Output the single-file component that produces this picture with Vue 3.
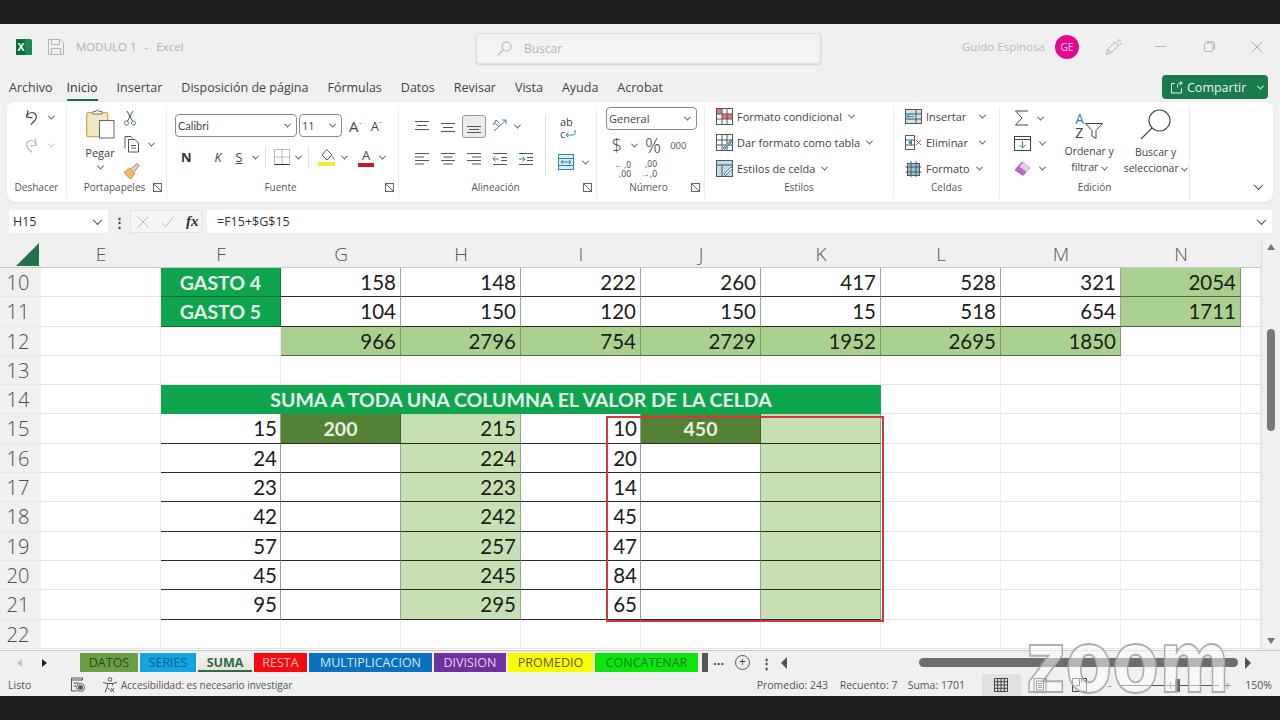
<script setup>
const tabsTop = ['Archivo', 'Inicio', 'Insertar', 'Disposición de página', 'Fórmulas', 'Datos', 'Revisar', 'Vista', 'Ayuda', 'Acrobat']
const columns = ['E', 'F', 'G', 'H', 'I', 'J', 'K', 'L', 'M', 'N', '']

const plainRow = (n) => ({ n, cells: Array.from({ length: 11 }, () => ({})) })
const num = (t) => ({ t, k: 'num' })
const tot = (t) => ({ t, k: 'tot' })

const tail = [15, 24, 23, 42, 57, 45, 95]
const extra = [10, 20, 14, 45, 47, 84, 65]

const dataRows = tail.map((v, i) => ({
  n: 15 + i,
  cells: [
    {},
    { t: v, k: 'num tbl' },
    i === 0 ? { t: 200, k: 'fixed' } : { k: 'tbl' },
    { t: v + 200, k: 'soft' },
    { t: extra[i], k: 'num tbl' },
    i === 0 ? { t: 450, k: 'fixed' } : { k: 'tbl' },
    { k: 'soft' },
    {}, {}, {}, {}, {},
  ].slice(0, 11),
}))

const rows = [
  { n: 10, cells: [{}, { t: 'GASTO 4', k: 'head' }, num(158), num(148), num(222), num(260), num(417), num(528), num(321), tot(2054), {}] },
  { n: 11, cells: [{}, { t: 'GASTO 5', k: 'head' }, num(104), num(150), num(120), num(150), num(15), num(518), num(654), tot(1711), {}] },
  { n: 12, cells: [{}, {}, tot(966), tot(2796), tot(754), tot(2729), tot(1952), tot(2695), tot(1850), {}, {}] },
  plainRow(13),
  { n: 14, cells: [{}, { t: 'SUMA A TODA UNA COLUMNA EL VALOR DE LA CELDA', k: 'title', span: 6 }, {}, {}, {}, {}] },
  ...dataRows,
  plainRow(22),
]

const sheets = [
  { name: 'DATOS', w: 58, bg: '#6c9e46', fg: '#2f4a1c' },
  { name: 'SERIES', w: 56, bg: '#12a5e2', fg: '#0c5f86' },
  { name: 'SUMA', w: 54, bg: 'linear-gradient(#f4f4f4, #e9e2d8)', fg: '#2e6b45', active: true },
  { name: 'RESTA', w: 53, bg: '#f40a0f', fg: '#f6c0c0' },
  { name: 'MULTIPLICACION', w: 123, bg: '#0b70bd', fg: '#cfe8f8' },
  { name: 'DIVISION', w: 72, bg: '#70309f', fg: '#e2d0ee' },
  { name: 'PROMEDIO', w: 85, bg: '#fbfb00', fg: '#5c5c10' },
  { name: 'CONCATENAR', w: 103, bg: '#0de60d', fg: '#0e7a28' },
]
</script>

<template>
  <div class="screen">
    <div class="window">
      <header class="titlebar">
        <div class="tb-left">
          <svg class="xl" width="16" height="16" viewBox="0 0 16 16">
            <rect width="16" height="16" rx="1.5" fill="#1a8a50" />
            <rect width="9" height="16" rx="1" fill="#0e6b3a" />
            <text x="1.6" y="12" font-size="10.5" font-weight="700" fill="#fff" font-family="Liberation Sans, sans-serif">X</text>
          </svg>
          <svg class="save" width="16" height="16" viewBox="0 0 16 16" fill="none" stroke="#b4b4b4">
            <path d="M.5.5h12l3 3v12H.5zM3.5.5v5h8v-5M3.5 15.5v-6h9v6" />
          </svg>
          <span class="doc">MODULO 1</span>
          <span class="doc sep">-</span>
          <span class="doc">Excel</span>
        </div>
        <div class="search">
          <svg width="15" height="15" viewBox="0 0 15 15" fill="none" stroke="#b8b8b8" stroke-width="1.1">
            <circle cx="9.5" cy="5.5" r="4.5" /><path d="M6 9l-5 5" />
          </svg>
          <span>Buscar</span>
        </div>
        <div class="tb-right">
          <span class="user">Guido Espinosa</span>
          <span class="avatar">GE</span>
          <svg class="pen" width="18" height="18" viewBox="0 0 18 18" fill="none" stroke="#b4b4b4">
            <path d="M1.5 16.5l1-5L10 4l4 3-7.5 7.5zM2.5 11.5l4 3M14 1l-1 2.5M17 5l-2 .8M16 1.5l-1.8 2" />
          </svg>
          <svg class="min" width="11" height="11" viewBox="0 0 11 11" stroke="#bcbcbc"><path d="M0 5.5h11" /></svg>
          <svg class="rest" width="11" height="11" viewBox="0 0 11 11" fill="none" stroke="#b4b4b4">
            <rect x=".5" y="2" width="8.5" height="8.5" rx="1.5" /><path d="M2.5.5h6a2 2 0 0 1 2 2v6" />
          </svg>
          <svg class="close" width="12" height="12" viewBox="0 0 12 12" stroke="#adadad"><path d="M.5.5l11 11M11.5.5l-11 11" /></svg>
        </div>
      </header>

      <nav class="tabs">
        <span v-for="t in tabsTop" :key="t" class="tab" :class="{ on: t === 'Inicio' }">{{ t }}</span>
        <button class="share">
          <svg width="13" height="13" viewBox="0 0 13 13" fill="none" stroke="#e8f4ec">
            <path d="M5 2.5H1.5v9.5h10V7.5M7.5 6.500V4.500c0-1.500 1-2.500 2.500-2.500h2M10 .5L12.300 2 10 4" />
          </svg>
          <span>Compartir</span>
          <i class="chev light"></i>
        </button>
      </nav>

      <section class="ribbon">
        <div class="group g-undo">
          <div class="undo-body">
            <div class="ic-row">
              <svg width="17" height="17" viewBox="0 0 17 17" fill="none" stroke="#444" stroke-width="1.2">
                <path d="M5 1.500L3.500 8l6 .8M3.500 8C5 4.500 8 3 10.500 3.800c3.500 1 3.700 6 .8 8.200L8 15.500" />
              </svg>
              <i class="chev"></i>
            </div>
            <div class="ic-row faded">
              <svg width="17" height="17" viewBox="0 0 17 17" fill="none" stroke="#b9b9b9" stroke-width="1.2">
                <path d="M12 1.500L13.500 8l-6 .8M13.500 8C12 4.500 9 3 6.500 3.800c-3.500 1-3.700 6-.8 8.200L9 15.500" />
              </svg>
              <i class="chev pale"></i>
            </div>
          </div>
          <div class="g-label">Deshacer</div>
        </div>

        <div class="group g-clip">
          <div class="clip-body">
            <div class="paste">
              <svg width="29" height="30" viewBox="0 0 29 30">
                <rect x=".7" y="3.700" width="21" height="24" rx="1.500" fill="#f3e7c4" stroke="#c9ad63" stroke-width="1.300" />
                <path d="M7 5V2.500h3a1.500 1.500 0 0 1 3 0h3V5z" fill="#fff" stroke="#777" />
                <rect x="13.500" y="11.500" width="14.500" height="17.500" fill="#fff" stroke="#666" />
              </svg>
              <span class="paste-txt">Pegar</span>
              <i class="chev"></i>
            </div>
            <div class="clip-tools">
              <svg width="14" height="16" viewBox="0 0 14 16" fill="none" stroke="#555">
                <path d="M4 1l5.500 10M10 1L4.500 11" />
                <circle cx="3.500" cy="13" r="2" stroke="#3f7fb0" /><circle cx="10.500" cy="13" r="2" stroke="#3f7fb0" />
              </svg>
              <div class="ic-row">
                <svg width="18" height="18" viewBox="0 0 18 18" fill="#fff" stroke="#555">
                  <path d="M2 13.500V1.500h6l2 2" fill="none" />
                  <path d="M5.500 4.500h6.500l3.500 3.500v9h-10zM8 10.500h5M8 13h5" />
                </svg>
                <i class="chev"></i>
              </div>
              <svg width="18" height="18" viewBox="0 0 18 18">
                <path d="M1 10l6-4 5 5-4 6c-2-.5-5-3.500-7-7z" fill="#efb56f" stroke="#c98b3f" stroke-width=".7" />
                <path d="M8.500 6.500L14 1.500l2 2-4.500 6" fill="#e8d6b8" stroke="#666" stroke-width=".8" />
              </svg>
            </div>
          </div>
          <div class="g-label launch-row"><span></span><span>Portapapeles</span><i class="launch"></i></div>
        </div>

        <div class="group g-font">
          <div class="font-body">
            <div class="ic-row">
              <div class="select s-font"><span>Calibri</span><i class="chev"></i></div>
              <div class="select s-size"><span>11</span><i class="chev"></i></div>
              <span class="grow">A<sup>ˆ</sup></span>
              <span class="shrink">A<sup>ˇ</sup></span>
            </div>
            <div class="ic-row font-tools">
              <b class="ft-n">N</b>
              <em class="ft-k">K</em>
              <u class="ft-s">S</u>
              <i class="chev"></i>
              <span class="vbar"></span>
              <svg class="ft-b" width="16" height="16" viewBox="0 0 16 16" fill="none" stroke="#777" stroke-dasharray="1 1">
                <path d="M.5.500h15v15H.5zM8 .5v15M.5 8h15" />
                <path d="M.5 15.500h15" stroke="#333" stroke-dasharray="none" />
              </svg>
              <i class="chev"></i>
              <span class="vbar"></span>
              <svg class="ft-fill" width="18" height="18" viewBox="0 0 18 18">
                <path d="M8.500 1.500L14 7l-5 5-5-5z" fill="#fff" stroke="#555" />
                <path d="M14.500 8.500c1 1.500 1.500 2 1.500 3" fill="none" stroke="#555" />
                <rect y="14" width="17" height="4" fill="#f5ee2b" />
              </svg>
              <i class="chev"></i>
              <span class="ft-color">A</span>
              <i class="chev"></i>
            </div>
          </div>
          <div class="g-label launch-row"><span></span><span>Fuente</span><i class="launch"></i></div>
        </div>

        <div class="group g-align">
          <div class="align-body">
            <div class="align-grid">
              <div class="ic-row a-row">
                <svg class="al" viewBox="0 0 16 16"><path d="M1 3.500h14M3 7.500h10M1 11.500h14" /></svg>
                <svg class="al" viewBox="0 0 16 16"><path d="M1 5.500h14M3 9.500h10M1 13.500h14" /></svg>
                <span class="al-on"><svg class="al" viewBox="0 0 16 16"><path d="M1 8.500h14M3 11.500h10M1 14.500h14" /></svg></span>
                <svg class="orient" width="18" height="18" viewBox="0 0 18 18" fill="none">
                  <path d="M2 14L14 3M10 3h4v4" stroke="#2e86a8" />
                  <path d="M2 5l5 5M1 8l3-5 3 3" stroke="#666" />
                </svg>
                <i class="chev"></i>
              </div>
              <div class="ic-row a-row">
                <svg class="al" viewBox="0 0 16 16"><path d="M1 2.500h14M1 6h9M1 9.500h14M1 13h9" /></svg>
                <svg class="al" viewBox="0 0 16 16"><path d="M1 2.500h14M3.500 6h9M1 9.500h14M3.500 13h9" /></svg>
                <svg class="al al-r" viewBox="0 0 16 16"><path d="M1 2.500h14M6 6h9M1 9.500h14M6 13h9" /></svg>
                <svg class="al al-i" viewBox="0 0 16 16"><path d="M1 2.500h14M1 13.500h14M9 6.500h6M9 9.500h6" /><path class="tl" d="M7 8H1M3.500 5.500L1 8l2.500 2.500" /></svg>
                <svg class="al al-i" viewBox="0 0 16 16"><path d="M1 2.500h14M1 13.500h14M9 6.500h6M9 9.500h6" /><path class="tl" d="M1 8h6M4.500 5.500L7 8l-2.500 2.500" /></svg>
              </div>
            </div>
            <span class="vbar tall"></span>
            <div class="wrap-col">
              <div class="wrap-ic">
                <span class="ab">ab</span>
                <span class="cw">c<svg width="11" height="8" viewBox="0 0 11 8" fill="none" stroke="#2e86a8"><path d="M10 0v2.500c0 2-1 2.500-3 2.500H1M3.500 2.500L1 5l2.500 2.500" /></svg></span>
              </div>
              <div class="ic-row">
                <svg width="16" height="16" viewBox="0 0 16 16" fill="#d8eef7" stroke="#2e86a8">
                  <rect x=".5" y=".5" width="15" height="15" /><path d="M.5 4.500h15M.5 11.500h15M3 8h10M5 6L3 8l2 2M11 6l2 2-2 2" fill="none" />
                </svg>
                <i class="chev"></i>
              </div>
            </div>
          </div>
          <div class="g-label launch-row"><span></span><span>Alineación</span><i class="launch"></i></div>
        </div>

        <div class="group g-num">
          <div class="num-body">
            <div class="select s-general"><span>General</span><i class="chev"></i></div>
            <div class="ic-row n-row">
              <span class="dollar">$</span><i class="chev"></i>
              <span class="pct">%</span>
              <span class="thou">000</span>
            </div>
            <div class="ic-row n-row2">
              <span class="dec"><span class="arr">←</span>,0<br />,00</span>
              <span class="dec">,00<br /><span class="arr">→</span>,0</span>
            </div>
          </div>
          <div class="g-label launch-row"><span></span><span>Número</span><i class="launch"></i></div>
        </div>

        <div class="group g-style">
          <div class="list-body">
            <div class="ic-row li">
              <svg class="cell-ic" viewBox="0 0 17 17" stroke="#555" fill="#fff">
                <rect x=".5" y=".5" width="16" height="16" /><rect x="1" y="1" width="5" height="5" fill="#e9737a" stroke="none" /><rect x="6" y="6" width="10" height="5" fill="#e9737a" stroke="none" /><path d="M6 .5v16M11 .5v16M.5 6h16M.5 11h16" fill="none" />
              </svg>
              <span>Formato condicional</span><i class="chev"></i>
            </div>
            <div class="ic-row li">
              <svg class="cell-ic" viewBox="0 0 17 17" stroke="#555" fill="#fff">
                <rect x=".5" y=".5" width="16" height="16" /><path d="M6 .5v16M11 .5v16M.5 6h16M.5 11h16" fill="none" /><path d="M7 14l8-8 1.500 1.500-8 8z" fill="#7fb7d6" stroke="#4c7f9c" />
              </svg>
              <span>Dar formato como tabla</span><i class="chev"></i>
            </div>
            <div class="ic-row li">
              <svg class="cell-ic" viewBox="0 0 17 17" stroke="#555" fill="#bcdcec">
                <rect x=".5" y=".5" width="16" height="16" /><path d="M.5 5h16M6 5v11.500" fill="none" /><path d="M8 14l7-7 1.500 1.500-7 7z" fill="#fff" stroke="#4c7f9c" />
              </svg>
              <span>Estilos de celda</span><i class="chev"></i>
            </div>
          </div>
          <div class="g-label">Estilos</div>
        </div>

        <div class="group g-cells">
          <div class="list-body">
            <div class="ic-row li">
              <svg class="cell-ic" viewBox="0 0 17 17" fill="#c9e3f1" stroke="#555">
                <rect x=".5" y="1.500" width="16" height="14" /><path d="M11 1.500v14M.5 6h16M.5 11h16" fill="none" /><path d="M9 8.500H2M5 5.500L2 8.500l3 3" fill="none" stroke="#2e86a8" />
              </svg>
              <span>Insertar</span><i class="chev wide"></i>
            </div>
            <div class="ic-row li">
              <svg class="cell-ic" viewBox="0 0 17 17" fill="#c9e3f1" stroke="#555">
                <path d="M.5 1.500h9v14h-9zM.5 6h9M.5 11h9" fill="none" /><path d="M3 8.500l4-3v6z" fill="#2e86a8" stroke="none" /><path d="M11 6l5 5M16 6l-5 5" fill="none" stroke="#d8434f" />
              </svg>
              <span>Eliminar</span><i class="chev wide"></i>
            </div>
            <div class="ic-row li">
              <svg class="cell-ic" viewBox="0 0 17 17" fill="#8fc4df" stroke="#555">
                <rect x="2.500" y="3.500" width="12" height="12" /><path d="M.5 7h16M.5 12h16M6 1v16M11 1v16" fill="none" />
              </svg>
              <span>Formato</span><i class="chev"></i>
            </div>
          </div>
          <div class="g-label">Celdas</div>
        </div>

        <div class="group g-edit">
          <div class="edit-body">
            <div class="edit-col">
              <div class="ic-row">
                <svg width="15" height="16" viewBox="0 0 15 16" fill="none" stroke="#444"><path d="M14 1H1.500l6.500 7-6.500 7H14" /></svg>
                <i class="chev"></i>
              </div>
              <div class="ic-row">
                <svg width="17" height="15" viewBox="0 0 17 15" fill="#fff" stroke="#444"><rect x=".5" y=".5" width="16" height="14" /><path d="M.5 3.500h16" /><path d="M8.500 5v7M5.500 9l3 3 3-3" fill="none" stroke="#2e86a8" /></svg>
                <i class="chev"></i>
              </div>
              <div class="ic-row">
                <svg width="17" height="15" viewBox="0 0 17 15"><path d="M1 9l7-8 8 6-7 7.500z" fill="#b56cc0" stroke="#8d4a99" stroke-width=".7" /><path d="M9 1.500l7 5.500-3.500 4-7-5.500z" fill="#e8c9ec" /></svg>
                <i class="chev"></i>
              </div>
            </div>
            <div class="big-btn b-sort">
              <div class="sort-ic">
                <div class="az"><span class="a">A</span><span class="z">Z</span></div>
                <svg width="18" height="18" viewBox="0 0 18 18" fill="none" stroke="#444"><path d="M.5 1.500h17l-6.500 7v8l-4-2.500V8.500z" /></svg>
              </div>
              <span>Ordenar y</span>
              <span>filtrar <i class="chev"></i></span>
            </div>
            <div class="big-btn b-find">
              <svg width="31" height="31" viewBox="0 0 31 31" fill="none" stroke="#444" stroke-width="1.100">
                <circle cx="19.500" cy="11.500" r="10.500" /><path d="M12 19L1 30" />
              </svg>
              <span>Buscar y</span>
              <span>seleccionar <i class="chev"></i></span>
            </div>
          </div>
          <div class="g-label">Edición</div>
        </div>

        <div class="g-rest"><i class="chev big"></i></div>
      </section>

      <div class="formula">
        <div class="namebox"><span>H15</span><i class="chev big"></i></div>
        <span class="dots">⋮</span>
        <div class="fx-btns">
          <svg width="12" height="12" viewBox="0 0 12 12" stroke="#bdbdbd"><path d="M.5.5l11 11M11.500.5l-11 11" /></svg>
          <svg width="13" height="12" viewBox="0 0 13 12" fill="none" stroke="#bdbdbd"><path d="M.5 6.500l4 4.500 8-10.500" /></svg>
          <span class="fx">fx</span>
        </div>
        <div class="finput"><span>=F15+$G$15</span><i class="chev big"></i></div>
      </div>

      <div class="sheet-wrap">
        <div class="sheet">
          <div class="corner"><span class="tri"></span></div>
          <div v-for="c in columns" :key="'c' + c" class="col-head">{{ c }}</div>
          <template v-for="r in rows" :key="r.n">
            <div class="row-head">{{ r.n }}</div>
            <div
              v-for="(c, i) in r.cells"
              :key="i"
              class="cell"
              :class="c.k"
              :style="c.span ? { gridColumn: 'span ' + c.span } : null"
            >{{ c.t }}</div>
          </template>
          <div class="range"></div>
        </div>
        <div class="vscroll">
          <i class="up"></i>
          <div class="vtrack"><div class="vthumb"></div></div>
          <i class="down"></i>
        </div>
      </div>

      <div class="sheetbar">
        <div class="nav">
          <i class="tri-l pale-tri"></i>
          <i class="tri-r"></i>
        </div>
        <div class="sheet-tabs">
          <span
            v-for="s in sheets"
            :key="s.name"
            class="stab"
            :class="{ active: s.active }"
            :style="{ width: s.w + 'px', background: s.bg, color: s.fg }"
          >{{ s.name }}</span>
          <span class="sliver"></span>
        </div>
        <span class="more">...</span>
        <span class="plus">+</span>
        <span class="dots2">⋮</span>
        <i class="tri-l dark"></i>
        <div class="hscroll"><div class="hthumb"></div></div>
        <i class="tri-r dark"></i>
      </div>

      <footer class="status">
        <span class="ready">Listo</span>
        <svg class="macro" width="16" height="16" viewBox="0 0 16 16" fill="none" stroke="#555">
          <path d="M1.500 1h11v2h-11zM1.500 3v11h5M3.500 6h5M3.500 9h2.500" />
          <circle cx="10.500" cy="10.500" r="4" /><circle cx="10.500" cy="10.500" r="2" fill="#555" />
        </svg>
        <svg class="access" width="16" height="17" viewBox="0 0 16 17" fill="none" stroke="#555">
          <circle cx="8" cy="2.500" r="1.800" /><path d="M1 5.500l4.500 1v3L3 15.500M15 5.500l-4.500 1v2M5.500 6.500h5M6 11l3 3M9 11l3 4M12 11l-3 4" />
        </svg>
        <span class="acc-txt">Accesibilidad: es necesario investigar</span>
        <div class="st-right">
          <span class="stat s1">Promedio: 243</span>
          <span class="stat s2">Recuento: 7</span>
          <span class="stat s3">Suma: 1701</span>
          <span class="view on">
            <svg width="14" height="14" viewBox="0 0 14 14" fill="none" stroke="#444"><path d="M.5.500h13v13H.5zM.5 3.700h13M.5 7h13M.5 10.300h13M3.700.5v13M7 .5v13M10.300.5v13" /></svg>
          </span>
          <span class="view">
            <svg width="14" height="15" viewBox="0 0 14 15" fill="none" stroke="#444"><path d="M1 .5h12v14H1zM3.500 3h7v9h-7zM5 5.500h4M5 7.500h4M5 9.500h4" /></svg>
          </span>
          <span class="view">
            <svg width="15" height="14" viewBox="0 0 15 14" fill="none" stroke="#444"><path d="M.5.500h14v13H.5zM7.500.5v7H4M9.500.5v4" /></svg>
          </span>
          <span class="zm minus">-</span>
          <div class="slider"><i class="notch"></i><i class="knob"></i></div>
          <span class="zm pluss">+</span>
          <span class="pct-z">150%</span>
        </div>
      </footer>
    </div>
    <div class="watermark">zoom</div>
  </div>
</template>

<style>
html, body { margin: 0; background: #1e1e1e; }
</style>

<style scoped>
.screen {
  position: relative;
  width: 1280px;
  height: 720px;
  padding: 24px 0;
  box-sizing: border-box;
  background: #1e1e1e;
  overflow: hidden;
  font-family: "Open Sans", "Noto Sans", sans-serif;
  color: #444;
}
.window {
  height: 672px;
  background: #f0f0f0;
  display: flex;
  flex-direction: column;
}
svg { display: block; flex-shrink: 0; }

.chev {
  display: inline-block;
  width: 4px;
  height: 4px;
  border-right: 1.2px solid #555;
  border-bottom: 1.2px solid #555;
  transform: rotate(45deg) translate(-1px, -1px);
  flex-shrink: 0;
}
.chev.pale { border-color: #c4c4c4; }
.chev.light { border-color: #eaf5ee; }
.chev.big { width: 6px; height: 6px; border-width: 1.6px; border-color: #444; }

.ic-row { display: flex; align-items: center; }

/* title bar */
.titlebar {
  height: 51px;
  flex-shrink: 0;
  display: grid;
  grid-template-columns: 476px 345px 1fr;
}
.tb-left { display: flex; align-items: center; padding: 0 0 6px 16px; }
.save { margin-left: 16px; margin-right: 12px; }
.doc { font-size: 11.5px; color: #b2b2b2; }
.doc.sep { margin: 0 8px; }
.search {
  margin: 9px 0 11px;
  background: #f3f3f3;
  border: 1px solid #dfdfdf;
  border-radius: 4px;
  box-shadow: 0 1px 2px rgba(0,0,0,.14);
  display: flex;
  align-items: center;
  padding-left: 20px;
  gap: 12px;
  font-size: 12px;
  color: #b5b5b5;
}
.tb-right { display: flex; align-items: center; padding: 0 0 6px 141px; }
.user { font-size: 11.500px; color: #bababa; width: 93px; white-space: nowrap; }
.avatar {
  width: 24px;
  height: 24px;
  border-radius: 50%;
  background: #e3088c;
  color: #f8d6ea;
  font-size: 10px;
  display: flex;
  align-items: center;
  justify-content: center;
}
.pen { margin-left: 26px; }
.min { margin-left: 32px; }
.rest { margin-left: 38px; }
.close { margin-left: 36px; }

/* tabs */
.tabs {
  height: 27px;
  flex-shrink: 0;
  display: flex;
  align-items: flex-start;
  padding-left: 9px;
  gap: 19px;
  font-size: 12.500px;
  color: #444;
}
.tab { height: 22px; padding-top: 4px; line-height: 18px; white-space: nowrap; }
.tab.on { color: #333; border-bottom: 2px solid #1f7246; height: 20px; margin: 0 0 0 -5px; }
.share {
  margin-left: auto;
  margin-right: 12px;
  width: 106px;
  height: 24px;
  background: #197a4c;
  border: 0;
  border-radius: 4px;
  color: #eaf5ee;
  font: inherit;
  font-size: 12.500px;
  display: flex;
  align-items: center;
  gap: 4px;
  padding: 0 0 0 8px;
}
.share .chev { margin-left: 8px; }

/* ribbon */
.ribbon {
  height: 100px;
  flex-shrink: 0;
  margin: 0 7px;
  background: #fff;
  border-radius: 8px;
  box-shadow: 0 1px 2px rgba(0,0,0,.08);
  display: flex;
  font-size: 11px;
}
.group {
  display: flex;
  flex-direction: column;
  box-sizing: border-box;
  border-right: 1px solid #ececec;
  margin: 5px 0 3px;
}
.group > :first-child { flex: 1; min-height: 0; }
.g-label {
  height: 20px;
  flex-shrink: 0;
  text-align: center;
  font-size: 10px;
  color: #555;
  line-height: 16px;
}
.launch-row {
  display: grid;
  grid-template-columns: 1fr auto 1fr;
  align-items: center;
  padding-right: 4px;
  height: 20px;
  line-height: normal;
  padding-bottom: 4px;
  box-sizing: border-box;
}
.launch {
  justify-self: end;
  width: 7px;
  height: 7px;
  border: 1px solid #666;
  border-right-width: 1px;
  background: linear-gradient(45deg, transparent 46%, #666 46%, #666 56%, transparent 56%);
}
.g-undo { width: 60px; }
.g-clip { width: 100px; }
.g-font { width: 232px; }
.g-align { width: 198px; }
.g-num { width: 108px; }
.g-style { width: 189px; }
.g-cells { width: 106px; }
.g-edit { width: 190px; border-right: 1px solid #e8e8e8; }
.g-rest { flex: 1; display: flex; align-items: flex-end; justify-content: flex-end; padding: 0 11px 12px 0; }

.undo-body { display: flex; flex-direction: column; gap: 11px; padding: 2px 0 0 16px; }
.undo-body .chev { margin-left: 9px; }

.clip-body { display: flex; padding-left: 14px; }
.paste { width: 38px; display: flex; flex-direction: column; align-items: center; font-size: 11px; padding-top: 2px; }
.paste-txt { margin-top: 7px; line-height: 14px; }
.paste .chev { margin-top: 5px; }
.clip-tools { display: flex; flex-direction: column; gap: 9px; padding: 3px 0 0 4px; }
.clip-tools .chev { margin-left: 8px; }

.font-body { padding: 7px 0 0 8px; display: flex; flex-direction: column; gap: 8px; }
.select {
  box-sizing: border-box;
  height: 23px;
  border: 1px solid #8a8a8a;
  border-radius: 4px;
  display: flex;
  align-items: center;
  justify-content: space-between;
  padding: 0 6px 0 2px;
  font-size: 11px;
  color: #444;
}
.s-font { width: 122px; font-family: Lato, sans-serif; }
.s-size { width: 43px; margin-left: 2px; }
.grow, .shrink { font-size: 15px; line-height: 20px; margin-left: 7px; font-family: "Open Sans", sans-serif; }
.shrink { font-size: 13px; margin-left: 9px; }
sup { font-size: 8px; vertical-align: 4px; line-height: 0; color: #2e86a8; }
.font-tools { height: 24px; }
.ft-n { font-size: 13px; margin-left: 6px; color: #333; width: 24px; }
.ft-k { font-size: 12.500px; width: 26px; font-style: italic; text-align: center; }
.ft-s { font-size: 12.500px; width: 16px; text-align: center; }
.font-tools .chev { margin-left: 6px; }
.vbar { width: 1px; height: 22px; background: #e2e2e2; margin: 0 7px; flex-shrink: 0; }
.ft-b { margin-left: 1px; }
.ft-fill { margin-left: 2px; }
.ft-color {
  margin-left: 11px;
  width: 16px;
  text-align: center;
  font-size: 13px;
  line-height: 15px;
  border-bottom: 4px solid #c81a22;
  color: #444;
}

.align-body { display: flex; }
.align-grid { padding: 7px 0 0 15px; display: flex; flex-direction: column; gap: 9px; width: 131px; }
.a-row { height: 24px; gap: 10px; }
.al { width: 16px; height: 16px; fill: none; stroke: #555; }
.al .tl { stroke: #2e86a8; }
.al-on {
  width: 24px;
  height: 23px;
  margin: 0 -4px;
  background: #ececec;
  border: 1px solid #9a9a9a;
  border-radius: 3px;
  box-sizing: border-box;
  display: flex;
  align-items: center;
  justify-content: center;
}
.orient { margin-left: 0; margin-right: -5px; }
.vbar.tall { height: 62px; margin: 7px 0 0 0; }
.wrap-col { display: flex; flex-direction: column; padding: 9px 0 0 12px; gap: 12px; }
.wrap-col .chev { margin-left: 9px; }
.wrap-ic { height: 26px; display: flex; flex-direction: column; font-size: 11px; line-height: 12px; padding-left: 2px; }
.cw { display: flex; align-items: center; gap: 0; }

.num-body { padding: 0 0 0 9px; }
.s-general { width: 91px; padding-left: 2px; font-family: "Open Sans", sans-serif; }
.n-row { height: 26px; margin-top: 2px; }
.dollar { font-size: 18px; width: 22px; text-align: center; margin-right: 4px; font-weight: 300; }
.pct { font-size: 20px; margin-left: 8px; font-weight: 300; }
.thou { font-size: 9.500px; margin-left: 9px; color: #555; }
.n-row2 { gap: 6px; margin-left: 5px; margin-top: 2px; }
.dec { font-size: 8.500px; line-height: 8.500px; width: 20px; color: #444; text-align: right; }
.arr { color: #2e86a8; font-size: 10px; }

.list-body { display: flex; flex-direction: column; padding: 1px 0 0 11px; gap: 9px; }
.li { gap: 4px; height: 17px; font-size: 11px; white-space: nowrap; color: #444; }
.li .chev { margin-left: 3px; }
.li .chev.wide { margin-left: auto; margin-right: 0; }
.cell-ic { width: 17px; height: 17px; }
.g-cells .li { width: 80px; }

.edit-body { display: flex; }
.edit-col { display: flex; flex-direction: column; gap: 10px; padding: 3px 0 0 14px; width: 50px; }
.edit-col .chev { margin-left: 9px; }
.big-btn { display: flex; flex-direction: column; align-items: center; font-size: 10.500px; line-height: 16px; white-space: nowrap; }
.b-sort { width: 62px; margin-left: 2px; }
.b-find { width: 74px; margin-left: 5px; padding-top: 2px; }
.b-find svg { margin-bottom: 4px; }
.sort-ic { display: flex; align-items: flex-end; height: 31px; padding-top: 2px; margin-bottom: 3px; }
.az { display: flex; flex-direction: column; font-size: 14px; line-height: 14px; margin-right: 1px; }
.az .a { color: #2e86a8; }
.big-btn .chev { margin-left: 1px; }

/* formula bar */
.formula {
  height: 23px;
  margin: 8px 8px 0 9px;
  flex-shrink: 0;
  display: flex;
  align-items: center;
}
.namebox, .finput {
  background: #fff;
  height: 23px;
  display: flex;
  align-items: center;
  justify-content: space-between;
  box-sizing: border-box;
  padding: 0 7px 0 4px;
  font-size: 12.500px;
  color: #333;
  border-radius: 2px;
}
.namebox { width: 99px; }
.dots { width: 22px; text-align: center; font-weight: 700; font-size: 13px; }
.fx-btns {
  width: 72px;
  height: 23px;
  box-sizing: border-box;
  border: 1px solid #e2e2e2;
  border-radius: 2px;
  background: #f5f5f5;
  display: flex;
  align-items: center;
  gap: 12px;
  padding-left: 6px;
}
.fx { font-family: "Liberation Serif", serif; font-style: italic; font-weight: 700; font-size: 15px; color: #333; }
.finput { flex: 1; margin-left: 5px; padding-left: 10px; font-family: "Open Sans", sans-serif; }

/* sheet */
.sheet-wrap { margin-top: 7px; flex-shrink: 0; display: flex; height: 410px; }
.sheet {
  position: relative;
  width: 1261px;
  display: grid;
  grid-template-columns: 41px repeat(10, 120px) 20px;
  grid-template-rows: 28px;
  grid-auto-rows: 29.300px;
  align-content: start;
  background: #fff;
  font-family: Lato, sans-serif;
}
.corner { background: #f0f0f0; border-bottom: 1px solid #c8c8c8; display: flex; justify-content: flex-end; padding: 3px 2px 0 0; box-sizing: border-box; }
.tri { width: 23px; height: 23px; background: #23734a; clip-path: polygon(100% 0, 100% 100%, 0 100%); }
.col-head {
  background: #f0f0f0;
  border-bottom: 1px solid #c8c8c8;
  text-align: center;
  font: 300 19px/28px "Open Sans", sans-serif;
  color: #555;
}
.row-head {
  background: #f0f0f0;
  text-align: center;
  font: 300 20px/29px "Open Sans", sans-serif;
  color: #4c4c4c;
  padding-right: 5px;
  box-sizing: border-box;
  border-bottom: 1px solid #e6e6e6;
}
.cell {
  box-sizing: border-box;
  border-right: 1px solid #ececec;
  border-bottom: 1px solid #e4e4e4;
  font-size: 20.500px;
  line-height: 29px;
  color: #1c1c1c;
  white-space: nowrap;
  overflow: hidden;
}
.num, .tot, .soft { text-align: right; padding-right: 4px; }
.num { border-right-color: #a3a3a3; border-bottom-color: #2a2a2a; }
.tbl { border-right-color: #9c9c9c; border-bottom-color: #2a2a2a; }
.tbl.num { padding-right: 3px; }
.tot { background: #a9d08e; border-right-color: #7f9a6b; border-bottom-color: #506a3c; }
.soft { background: #c6e0b4; border-right-color: #95a88a; border-bottom-color: #2a2a2a; }
.head {
  background: #0fa54f;
  color: #e6f5ec;
  font-weight: 700;
  text-align: center;
  border-right-color: #0c7b3b;
  border-bottom-color: #0c6b35;
  font-size: 19.500px;
}
.title {
  background: #0fa54f;
  color: #e8f6ee;
  font-weight: 700;
  text-align: center;
  font-size: 19.500px;
  border: 0;
}
.fixed {
  background: #548235;
  color: #ecf3e6;
  font-weight: 700;
  text-align: center;
  border-bottom-color: #2a2a2a;
  border-right-color: #3f6128;
  font-size: 19.500px;
}
.range {
  position: absolute;
  left: 606px;
  top: 176px;
  width: 278px;
  height: 206px;
  box-sizing: border-box;
  border: 2px solid #cf3742;
  pointer-events: none;
}

.vscroll {
  flex: 1;
  display: flex;
  flex-direction: column;
  align-items: center;
  padding-top: 4px;
  box-sizing: border-box;
  border-left: 1px solid #dcdcdc;
}
.up, .down { width: 0; height: 0; border-left: 4.500px solid transparent; border-right: 4.500px solid transparent; flex-shrink: 0; }
.up { border-bottom: 6px solid #777; }
.down { border-top: 6px solid #777; margin-bottom: 6px; }
.vtrack { flex: 1; padding-top: 79px; }
.vthumb { width: 8px; height: 102px; background: #777; border-radius: 4px; }

/* sheet tabs */
.sheetbar {
  height: 24px;
  flex-shrink: 0;
  border-top: 1px solid #c9c9c9;
  box-sizing: border-box;
  display: flex;
  align-items: center;
}
.nav { width: 80px; display: flex; align-items: center; padding-left: 17px; gap: 20px; box-sizing: border-box; }
.tri-l, .tri-r { width: 0; height: 0; border-top: 4.500px solid transparent; border-bottom: 4.500px solid transparent; flex-shrink: 0; }
.tri-l { border-right: 5px solid #444; }
.tri-r { border-left: 5px solid #222; }
.pale-tri { border-right-color: #c0c0c0; }
.tri-l.dark, .tri-r.dark { border-top-width: 6px; border-bottom-width: 6px; border-left-width: 6px; border-right-width: 6px; }
.tri-l.dark { border-left: 0; border-right-color: #555; }
.tri-r.dark { border-right: 0; border-left-color: #555; margin-left: 7px; }
.sheet-tabs { display: flex; gap: 2px; height: 19px; }
.stab {
  box-sizing: border-box;
  height: 19px;
  font-size: 12.500px;
  line-height: 19px;
  text-align: center;
  white-space: nowrap;
  overflow: hidden;
  flex-shrink: 0;
}
.stab.active { font-weight: 700; border-bottom: 2px solid #2e6b45; }
.sliver { width: 6px; height: 19px; background: #555; margin-left: 2px; }
.more { width: 12px; margin-left: 5px; font-size: 13px; font-weight: 700; line-height: 10px; height: 16px; color: #444; }
.plus {
  margin-left: 10px;
  width: 13px;
  height: 13px;
  border: 1px solid #555;
  border-radius: 50%;
  font-size: 12px;
  line-height: 12px;
  text-align: center;
  color: #444;
}
.dots2 { width: 10px; margin-left: 10px; text-align: center; font-size: 13px; font-weight: 700; }
.sheetbar .tri-l.dark { margin-left: 11px; }
.hscroll { width: 319px; margin-left: 132px; }
.hthumb { height: 9px; background: #6d6d6d; border-radius: 5px; }

/* status */
.status {
  height: 22px;
  flex: 1;
  display: flex;
  align-items: center;
  font-size: 10px;
  color: #555;
}
.ready { margin-left: 8px; width: 62px; font-size: 10.500px; }
.access { margin-left: 16px; }
.acc-txt { margin-left: 3px; white-space: nowrap; }
.st-right { margin-left: auto; display: flex; align-items: center; height: 100%; }
.stat { font-size: 10.500px; white-space: nowrap; }
.s1 { width: 83px; }
.s2 { width: 68px; }
.s3 { width: 74px; }
.view { width: 39px; height: 100%; display: flex; align-items: center; justify-content: center; }
.view.on { background: #e1e1e1; }
.zm { font-size: 13px; color: #999; }
.minus { margin-left: 9px; }
.slider { position: relative; width: 98px; height: 1px; background: #555; margin-left: 9px; }
.notch { position: absolute; left: 49px; top: -3px; width: 1px; height: 7px; background: #777; }
.knob { position: absolute; left: 54px; top: -6px; width: 5px; height: 13px; background: #666; }
.pluss { margin-left: 5px; }
.pct-z { margin: 0 8px 0 14px; font-size: 10.500px; }

.watermark {
  position: absolute;
  left: 1026px;
  top: 618px;
  font: 700 68px/72px "DejaVu Sans", sans-serif;
  color: rgba(255, 255, 255, .5);
  -webkit-text-stroke: 1.500px rgba(165, 165, 165, .9);
  transform: scaleY(1.25);
  transform-origin: left top;
  pointer-events: none;
}
</style>
